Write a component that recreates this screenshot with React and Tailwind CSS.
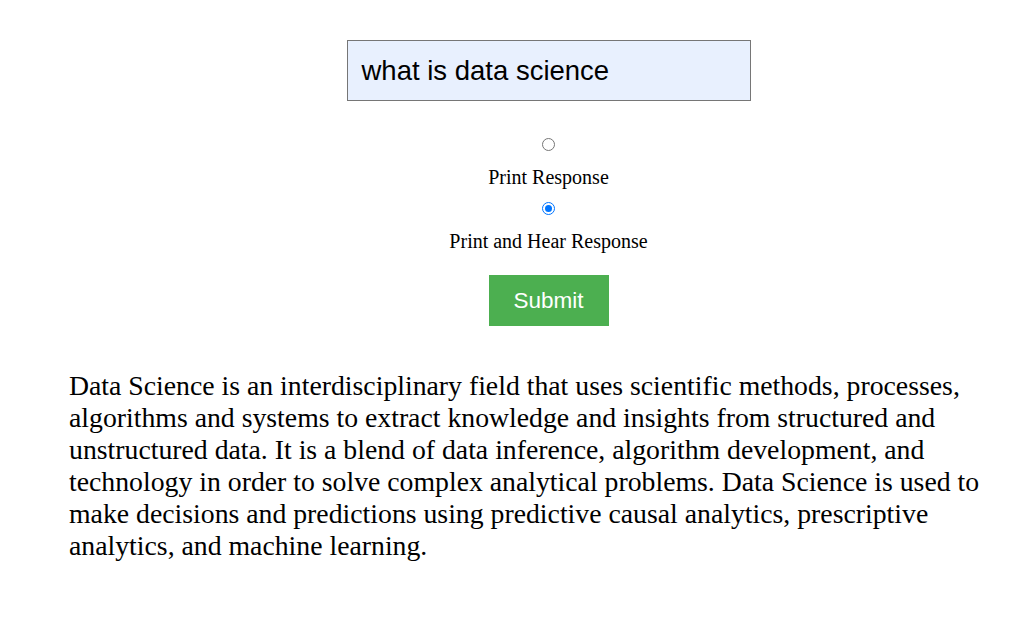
export default function App() {
  return (
    <div className="w-[1035px] h-[620px] bg-white font-['Liberation_Serif','Times_New_Roman',Tinos,serif]">
      <div className="pl-[62px] pt-[40px] flex flex-col items-center">
        <div className="w-[404px] h-[61px] border border-[#767676] bg-[#e8f0fe] flex items-center pl-[14px] text-[27.5px] text-black font-['Liberation_Sans',Arial,sans-serif]">
          what is data science
        </div>
        <div className="mt-[37px] w-[13px] h-[13px] rounded-full border border-[#767676] bg-white" />
        <div className="h-[24px] mt-[14px] flex items-center text-[20px] text-black leading-none">Print Response</div>
        <div className="mt-[13px] w-[13px] h-[13px] rounded-full border-[1.5px] border-[#0075ff] bg-white flex items-center justify-center">
          <div className="w-[7px] h-[7px] rounded-full bg-[#0075ff]" />
        </div>
        <div className="h-[24px] mt-[14px] flex items-center text-[20px] text-black leading-none">Print and Hear Response</div>
        <div className="mt-[22px] w-[120px] h-[51px] bg-[#4caf50] text-white text-[22.5px] flex items-center justify-center font-['Liberation_Sans',Arial,sans-serif]">
          Submit
        </div>
      </div>
      <p className="mt-[44px] ml-[69px] w-[920px] text-[27.75px] leading-[32px] text-black">
        Data Science is an interdisciplinary field that uses scientific methods, processes, algorithms and systems to extract knowledge and insights from structured and unstructured data. It is a blend of data inference, algorithm development, and technology in order to solve complex analytical problems. Data Science is used to make decisions and predictions using predictive causal analytics, prescriptive analytics, and machine learning.
      </p>
    </div>
  );
}
